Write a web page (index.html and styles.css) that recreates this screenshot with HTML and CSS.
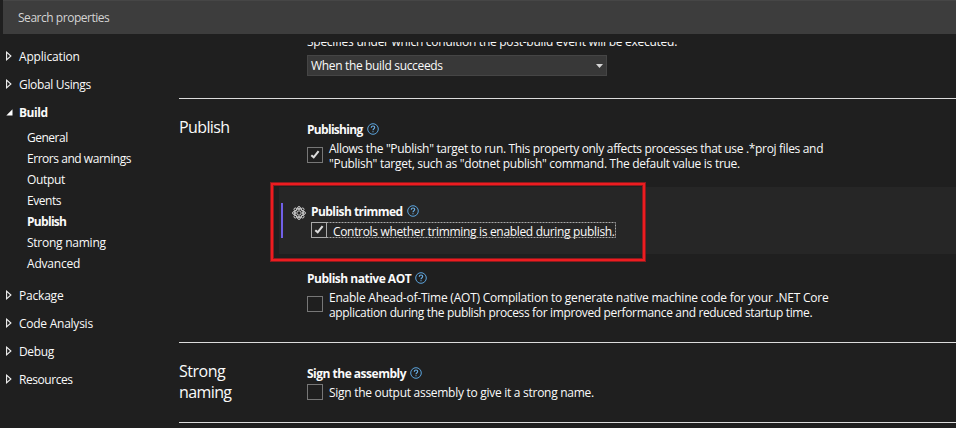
FILE: index.html
```html
<!DOCTYPE html>
<html lang="en">
<head>
<meta charset="utf-8">
<title>Project properties</title>
<link rel="stylesheet" href="styles.css">
</head>
<body>
<svg width="0" height="0" class="defs" aria-hidden="true">
  <symbol id="help" viewBox="0 0 12 12"><circle cx="6" cy="6" r="5.3" fill="none" stroke="#5ba3dc" stroke-width="1"/><path d="M4.3 4.7C4.3 2.4 7.7 2.5 7.7 4.6C7.7 5.7 6 5.8 6 7.3M6 8.2V9.3" fill="none" stroke="#6cb2ea" stroke-width="1.1"/></symbol>
  <symbol id="check" viewBox="0 0 16 16"><path d="M4.3 8.2L6.7 10.3L11.6 4.2" fill="none" stroke="#dcdcdc" stroke-width="2.1"/></symbol>
  <symbol id="closed" viewBox="0 0 6 10"><path d="M.6 1.2L4.9 5L.6 8.8Z" fill="none" stroke="#f4f4f4" stroke-width="1.1"/></symbol>
  <symbol id="open" viewBox="0 0 7 7"><path d="M6.5 .3V6.5H.3Z" fill="#fff"/></symbol>
</svg>
<header class="search"><span class="t-search">Search properties</span></header>
<div class="body">
  <nav class="nav">
    <div class="top"><svg class="tri"><use href="#closed"/></svg><span class="t-application">Application</span></div>
    <div class="top"><svg class="tri"><use href="#closed"/></svg><span class="t-global">Global Usings</span></div>
    <div class="top bold"><svg class="tri-open"><use href="#open"/></svg><span class="t-build">Build</span></div>
    <div class="children">
      <div class="child"><span class="t-general">General</span></div>
      <div class="child"><span class="t-errors">Errors and warnings</span></div>
      <div class="child"><span class="t-output">Output</span></div>
      <div class="child"><span class="t-events">Events</span></div>
      <div class="child bold"><span class="t-publish">Publish</span></div>
      <div class="child"><span class="t-strong">Strong naming</span></div>
      <div class="child"><span class="t-advanced">Advanced</span></div>
    </div>
    <div class="top"><svg class="tri"><use href="#closed"/></svg><span class="t-package">Package</span></div>
    <div class="top"><svg class="tri"><use href="#closed"/></svg><span class="t-code">Code Analysis</span></div>
    <div class="top"><svg class="tri"><use href="#closed"/></svg><span class="t-debug">Debug</span></div>
    <div class="top"><svg class="tri"><use href="#closed"/></svg><span class="t-resources">Resources</span></div>
  </nav>
  <main class="main">
    <div class="event">
      <div class="clip"><span class="t-specifies">Specifies under which condition the post-build event will be executed.</span></div>
      <div class="select"><span class="t-when">When the build succeeds</span><svg class="arrow" viewBox="0 0 7 4"><path d="M0 0H7L3.5 4Z" fill="#d6d6d6"/></svg></div>
    </div>
    <section class="section publish">
      <h2><span class="t-h-publish">Publish</span></h2>
      <div class="settings">
        <div class="setting first">
          <div class="label"><span class="t-publishing">Publishing</span><svg class="help"><use href="#help"/></svg></div>
          <div class="option two"><span class="box"><svg><use href="#check"/></svg></span><div class="desc"><div class="t-allows">Allows the "Publish" target to run. This property only affects processes that use .*proj files and</div><div class="t-target">"Publish" target, such as "dotnet publish" command. The default value is true.</div></div></div>
        </div>
        <div class="setting focused">
          <i class="bar"></i>
          <svg class="gear" viewBox="0 0 14 14"><g fill="none" stroke="#d4d4d4" stroke-width="1"><circle cx="7" cy="7" r="2.2"/><circle cx="7" cy="7" r="4.3"/><circle cx="7" cy="2" r="1.4"/><circle cx="7" cy="12" r="1.4"/><circle cx="2" cy="7" r="1.4"/><circle cx="12" cy="7" r="1.4"/><circle cx="3.4" cy="3.4" r="1.4"/><circle cx="10.6" cy="3.4" r="1.4"/><circle cx="3.4" cy="10.6" r="1.4"/><circle cx="10.6" cy="10.6" r="1.4"/></g></svg>
          <div class="trimmed">
            <div class="label"><span class="t-trimmed">Publish trimmed</span><svg class="help"><use href="#help"/></svg></div>
            <div class="option focus"><span class="box"><svg><use href="#check"/></svg></span><div class="desc"><span class="t-controls">Controls whether trimming is enabled during publish.</span></div>
              <svg class="dots"><rect x=".5" y=".5" width="304" height="15" fill="none" stroke="#a8a8a8" stroke-dasharray="2 1"/></svg></div>
          </div>
          <div class="callout"></div>
        </div>
        <div class="setting native">
          <div class="label"><span class="t-native">Publish native AOT</span><svg class="help"><use href="#help"/></svg></div>
          <div class="option two"><span class="box"></span><div class="desc"><div class="t-enable">Enable Ahead-of-Time (AOT) Compilation to generate native machine code for your .NET Core</div><div class="t-app">application during the publish process for improved performance and reduced startup time.</div></div></div>
        </div>
      </div>
    </section>
    <section class="section signing">
      <h2><span class="t-h-strong">Strong</span><br><span class="t-h-naming">naming</span></h2>
      <div class="settings">
        <div class="setting first">
          <div class="label"><span class="t-sign">Sign the assembly</span><svg class="help"><use href="#help"/></svg></div>
          <div class="option"><span class="box"></span><div class="desc"><span class="t-output-sign">Sign the output assembly to give it a strong name.</span></div></div>
        </div>
      </div>
    </section>
    <section class="section"></section>
  </main>
</div>
</body>
</html>
```

FILE: styles.css
```css
* { box-sizing: border-box; }
body { margin: 0; width: 956px; height: 428px; overflow: hidden; background: #1f1f1f; color: #fafafa; font: 12px/15px "Open Sans", sans-serif; white-space: nowrap; }
svg { display: block; flex: none; }
.defs { position: absolute; }
.bold, .label { font-weight: 700; }
.search { height: 34px; margin-left: 3px; padding: 9px 15px; background: #3d3d3d; border-top: 1px solid #464646; line-height: 15px; color: #d4d4d4; }
.body { display: flex; height: 394px; }
.nav { width: 179px; flex: none; padding-top: 8px; }
.top { display: flex; align-items: center; height: 28px; padding-left: 6px; }
.top span { line-height: 16px; padding-top: 1px; }
.tri { width: 6px; height: 10px; margin-right: 7px; }
.tri-open { width: 7px; height: 7px; margin-right: 6px; }
.children { padding: 0 0 8px 27px; }
.child { height: 21px; line-height: 23px; }
.main { flex: 1; padding-top: 8px; min-width: 0; }
.event { height: 56px; padding-left: 128px; }
.clip { height: 13px; overflow: hidden; display: flex; align-items: flex-start; }
.clip span { margin-top: -8px; }
.select { display: flex; align-items: center; justify-content: space-between; width: 300px; height: 21px; padding: 0 3px; background: #383838; border: 1px solid #454545; }
.arrow { width: 7px; height: 4px; }
.section { display: grid; grid-template-columns: 128px 1fr; border-top: 1px solid #dcdcdc; }
.publish { height: 244px; }
.signing { height: 80px; }
h2 { margin: 0; padding-top: 18px; font-size: 16px; line-height: 21px; font-weight: 400; }
.settings { min-width: 0; }
.setting.first { padding-top: 22px; }
.publish .first { height: 88px; }
.label { display: flex; align-items: center; height: 16px; gap: 4px; }
.help { width: 12px; height: 12px; }
.option { display: flex; align-items: center; position: relative; height: 16px; margin-top: 3px; }
.option.two { height: 30px; margin-top: 3px; }
.box { width: 16px; height: 16px; flex: none; border: 1px solid #777; margin-right: 6px; }
.box svg { width: 16px; height: 16px; margin: -1px; }
.desc { padding-top: 1px; }
.focused { position: relative; display: flex; height: 67px; margin-left: -28px; padding: 16px 0 0 2px; background: #262626; }
.bar { width: 2px; height: 35px; background: #7160e8; }
.gear { width: 14px; height: 14px; margin: 3px 5px 0 9px; }
.focus .box { border-color: #aaa; }
.trimmed .label { height: 16px; }
.trimmed .desc { line-height: 15px; padding-top: 2px; }
.dots { position: absolute; left: 0; top: 0; width: 305px; height: 16px; }
.callout { position: absolute; left: -9px; top: -5px; width: 376px; height: 80px; border: 1px solid #8c1b1e; box-shadow: inset 0 0 0 2px #ed1c20, inset 0 0 0 3px #8c1b1e; }
.native { padding-top: 16px; }
.native .option { margin-top: 3px; }

/* Tracking of each text */
.t-search { letter-spacing: -.47px; }
.t-application { letter-spacing: -.17px; }
.t-global { letter-spacing: -.33px; }
.t-build { letter-spacing: -.45px; }
.t-general { letter-spacing: -.5px; }
.t-errors { letter-spacing: -.46px; }
.t-output { letter-spacing: -.35px; }
.t-events { letter-spacing: -.45px; }
.t-publish { letter-spacing: -.7px; }
.t-strong { letter-spacing: -.25px; }
.t-advanced { letter-spacing: -.2px; }
.t-package { letter-spacing: -.2px; }
.t-code { letter-spacing: -.25px; }
.t-debug { letter-spacing: -.35px; }
.t-resources { letter-spacing: -.45px; }
.t-specifies { letter-spacing: -.27px; }
.t-when { letter-spacing: -.34px; }
.t-h-publish { letter-spacing: -.6px; }
.t-publishing { letter-spacing: -.7px; }
.t-allows { letter-spacing: -.325px; }
.t-target { letter-spacing: -.28px; }
.t-trimmed { letter-spacing: -.55px; }
.t-controls { letter-spacing: -.33px; }
.t-native { letter-spacing: -.5px; }
.t-enable { letter-spacing: -.23px; }
.t-app { letter-spacing: -.35px; }
.t-h-strong { letter-spacing: -.5px; }
.t-h-naming { letter-spacing: -.6px; }
.t-sign { letter-spacing: -.5px; }
.t-output-sign { letter-spacing: -.28px; }
```
